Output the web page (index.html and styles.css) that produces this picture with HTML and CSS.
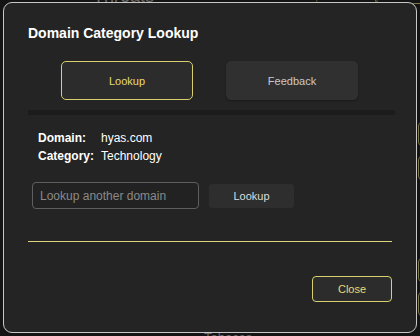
FILE: index.html
```html
<!DOCTYPE html>
<html>
<head>
<meta charset="utf-8">
<link rel="stylesheet" href="styles.css">
</head>
<body>
<div class="backdrop">
  <span class="bg-text bg-threats">Threats</span>
  <span class="bg-box bg-box-top1"></span>
  <span class="bg-box bg-box-top2"></span>
  <span class="bg-box bg-box-r1"></span>
  <span class="bg-box bg-box-r2"></span>
  <span class="bg-box bg-box-r3"></span>
  <span class="bg-box bg-box-r4"></span>
  <span class="bg-text bg-tabacco">Tabacco</span>
</div>
<div class="modal">
  <h1 class="title">Domain Category Lookup</h1>
  <div class="tabs">
    <button class="tab tab-active">Lookup</button>
    <button class="tab">Feedback</button>
  </div>
  <div class="tab-bar"></div>
  <div class="info">
    <span class="label">Domain:</span><span class="value">hyas.com</span>
    <span class="label">Category:</span><span class="value">Technology</span>
  </div>
  <div class="lookup-row">
    <input class="domain-input" type="text" placeholder="Lookup another domain">
    <button class="lookup-btn">Lookup</button>
  </div>
  <div class="divider"></div>
  <div class="footer">
    <button class="close-btn">Close</button>
  </div>
</div>
</body>
</html>
```

FILE: styles.css
```css
html, body {
  margin: 0;
  padding: 0;
}
body {
  width: 420px;
  height: 336px;
  background: #141414;
  font-family: "Liberation Sans", Arial, sans-serif;
  position: relative;
  overflow: hidden;
}
.backdrop {
  position: absolute;
  inset: 0;
}
.bg-text {
  position: absolute;
  color: #6a6a6a;
  font-size: 18px;
}
.bg-threats {
  left: 93px;
  top: -14px;
}
.bg-tabacco {
  left: 204px;
  top: 330px;
  font-size: 13px;
}
.bg-box {
  position: absolute;
  border: 1px solid #7d7544;
  border-radius: 4px;
}
.bg-box-top1 { left: 316px; top: -20px; width: 60px; height: 22px; border-color: #55502f; }
.bg-box-top2 { left: 375px; top: -20px; width: 60px; height: 22px; }
.bg-box-r1 { left: 418px; top: 122px; width: 20px; height: 22px; }
.bg-box-r2 { left: 418px; top: 156px; width: 20px; height: 22px; }
.bg-box-r3 { left: 418px; top: 258px; width: 20px; height: 22px; }
.bg-box-r4 { left: 418px; top: 292px; width: 20px; height: 22px; }

.modal {
  position: absolute;
  left: 3px;
  top: 2px;
  width: 412px;
  height: 329px;
  box-sizing: content-box;
  background: #242424;
  border: 1px solid #c8c8c8;
  border-radius: 9px;
  padding: 0;
  display: flex;
  flex-direction: column;
}
.title {
  margin: 22px 0 0 24px;
  font-size: 14px;
  line-height: 17px;
  font-weight: bold;
  color: #ffffff;
}
.tabs {
  margin-top: 19px;
  display: flex;
  justify-content: center;
  gap: 33px;
  padding-right: 1px;
}
.tab {
  width: 132px;
  height: 39px;
  box-sizing: border-box;
  border: 1px solid transparent;
  border-radius: 5px;
  background: #303030;
  color: #c9c9c9;
  font-family: "Liberation Sans", Arial, sans-serif;
  font-size: 11px;
  padding: 0;
  box-shadow: 0 1px 2px rgba(0,0,0,0.3);
}
.tab-active {
  border-color: #d9cf6e;
  background: #2c2c2c;
  color: #e6da78;
  box-shadow: none;
}
.tab-bar {
  margin: 10px 21px 0 24px;
  height: 5px;
  background: #1c1c1c;
}
.info {
  margin: 14px 0 0 34px;
  display: grid;
  grid-template-columns: auto 1fr;
  column-gap: 7px;
  font-size: 12px;
  line-height: 18px;
  color: #ffffff;
}
.label {
  font-weight: bold;
}
.lookup-row {
  margin: 17px 0 0 28px;
  display: flex;
  align-items: center;
  gap: 10px;
}
.domain-input {
  width: 167px;
  height: 27px;
  box-sizing: border-box;
  border: 1px solid #5e5e5e;
  border-radius: 4px;
  background: #222222;
  color: #eee;
  padding: 0 7px;
  font-family: "Liberation Sans", Arial, sans-serif;
  font-size: 12px;
  outline: none;
}
.domain-input::placeholder {
  color: #8a8a8a;
}
.lookup-btn {
  width: 85px;
  height: 24px;
  border: none;
  border-radius: 3px;
  background: #2e2e2e;
  color: #dddddd;
  font-family: "Liberation Sans", Arial, sans-serif;
  font-size: 11px;
  padding: 0;
}
.divider {
  margin: 32px 24px 0 24px;
  height: 1px;
  background: #ddd47e;
}
.footer {
  margin: 34px 24px 0 24px;
  display: flex;
  justify-content: flex-end;
}
.close-btn {
  width: 80px;
  height: 26px;
  box-sizing: border-box;
  border: 1px solid #d9cf6e;
  border-radius: 4px;
  background: #2c2c2c;
  color: #e6da78;
  font-family: "Liberation Sans", Arial, sans-serif;
  font-size: 11px;
  padding: 0;
}
```
